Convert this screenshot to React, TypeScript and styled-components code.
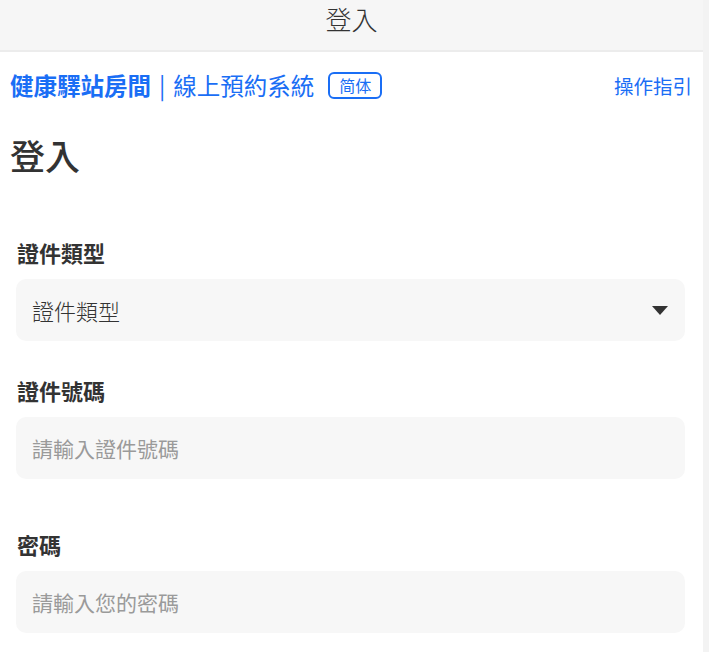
import React from 'react';
import styled, { createGlobalStyle } from 'styled-components';

const GlobalStyle = createGlobalStyle`
  html, body {
    margin: 0;
    padding: 0;
    background: #ffffff;
  }
  body {
    font-family: "Noto Sans CJK TC", "Noto Sans", "Liberation Sans", sans-serif;
    color: #333333;
  }
`;

const Shell = styled.div`
  display: flex;
  min-height: 652px;
`;

const Page = styled.div`
  flex: 1;
  display: flex;
  flex-direction: column;
`;

const Gutter = styled.div`
  width: 6px;
  background: #f3f3f3;
`;

const TopBar = styled.header`
  height: 52px;
  display: flex;
  justify-content: center;
  align-items: flex-start;
  padding-top: 4px;
  box-sizing: border-box;
  background: #f6f6f6;
  border-bottom: 2px solid #ececec;
  font-size: 26px;
  font-weight: 300;
  line-height: 30px;
  color: #333333;
`;

const NavRow = styled.nav`
  display: flex;
  align-items: center;
  justify-content: space-between;
  height: 30px;
  margin-top: 18px;
  padding: 0 11px 0 10px;
`;

const Brand = styled.div`
  display: flex;
  align-items: center;
  color: #1a6ef5;
  font-size: 23.5px;
  line-height: 30px;
`;

const BrandName = styled.span`
  font-weight: 700;
`;

const Divider = styled.span`
  margin: 0 8px 0 8px;
`;

const SystemName = styled.span`
  font-weight: 400;
`;

const LangBadge = styled.button`
  margin-left: 14px;
  padding: 0 9px;
  height: 27px;
  border: 2px solid #1a6ef5;
  border-radius: 6px;
  background: #ffffff;
  color: #1a6ef5;
  font-family: inherit;
  font-size: 16px;
  line-height: 20px;
`;

const GuideLink = styled.a`
  color: #1a6ef5;
  font-size: 19.5px;
  text-decoration: none;
`;

const Heading = styled.h1`
  margin: 35px 0 0 10px;
  font-size: 35px;
  font-weight: 500;
  line-height: 40px;
  color: #333333;
`;

const Form = styled.form`
  display: flex;
  flex-direction: column;
  padding: 63px 18px 0 16px;
`;

const Field = styled.div<{ $after: number }>`
  display: flex;
  flex-direction: column;
  gap: 13px;
  margin-bottom: ${({ $after }) => $after}px;
`;

const Label = styled.label`
  padding-left: 1px;
  font-size: 22px;
  font-weight: 700;
  line-height: 28px;
  color: #333333;
`;

const Box = styled.div`
  display: flex;
  align-items: center;
  height: 62px;
  padding: 0 16px;
  box-sizing: border-box;
  background: #f7f7f7;
  border-radius: 10px;
`;

const Input = styled.input`
  flex: 1;
  border: none;
  outline: none;
  background: transparent;
  font-family: inherit;
  font-size: 21px;
  color: #333333;
  padding: 0;

  &::placeholder {
    color: #9a9a9a;
  }
`;

const SelectValue = styled.span`
  flex: 1;
  font-size: 22px;
  font-weight: 300;
  color: #333333;
`;

const Caret = styled.svg`
  width: 16px;
  height: 9px;
  margin-right: 1px;
`;

export default function App() {
  return (
    <>
      <GlobalStyle />
      <Shell>
        <Page>
          <TopBar>登入</TopBar>
          <NavRow>
            <Brand>
              <BrandName>健康驛站房間</BrandName>
              <Divider>|</Divider>
              <SystemName>線上預約系統</SystemName>
              <LangBadge type="button">简体</LangBadge>
            </Brand>
            <GuideLink href="#">操作指引</GuideLink>
          </NavRow>
          <Heading>登入</Heading>
          <Form>
            <Field $after={35}>
              <Label>證件類型</Label>
              <Box>
                <SelectValue>證件類型</SelectValue>
                <Caret viewBox="0 0 16 9">
                  <path d="M0 0 H16 L8 9 Z" fill="#333333" />
                </Caret>
              </Box>
            </Field>
            <Field $after={51}>
              <Label>證件號碼</Label>
              <Box>
                <Input placeholder="請輸入證件號碼" />
              </Box>
            </Field>
            <Field $after={20}>
              <Label>密碼</Label>
              <Box>
                <Input type="password" placeholder="請輸入您的密碼" />
              </Box>
            </Field>
          </Form>
        </Page>
        <Gutter />
      </Shell>
    </>
  );
}
